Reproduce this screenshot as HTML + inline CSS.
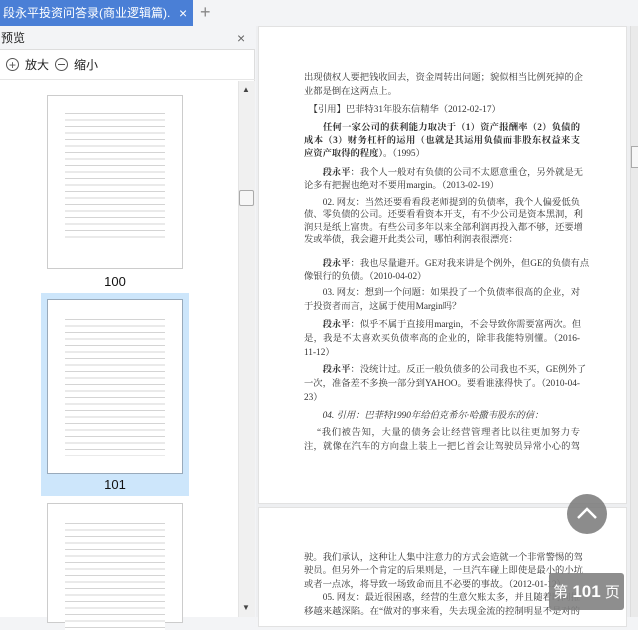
<!DOCTYPE html>
<html><head><meta charset="utf-8"><style>
*{margin:0;padding:0;box-sizing:border-box}
body{width:638px;height:617px;overflow:hidden;background:#f3f4f6;font-family:"Liberation Sans","Noto Sans CJK SC",sans-serif;position:relative}
.abs{position:absolute}
.tab{left:0;top:0;width:193px;height:26px;background:#4a7fd6;color:#fff;font-size:12px;line-height:26px;padding-left:3px;white-space:nowrap;overflow:hidden}
.tab .x{position:absolute;left:176px;top:0;font-size:14px;background:#4a7fd6;padding:0 3px}
.plus{left:200px;top:2px;font-size:18px;color:#888}
.side{left:0;top:26px;width:255px;height:591px;background:#fff;border-right:1px solid #ddd}
.hdr{left:0;top:26px;width:255px;height:24px;background:#f3f4f6;border-bottom:1px solid #ddd;font-size:12px;line-height:24px;padding-left:1px;color:#222}
.tool{left:0;top:50px;width:255px;height:30px;border-bottom:1px solid #e6e6e6;font-size:12px;line-height:30px;color:#222}
.sb{left:238px;top:81px;width:17px;height:536px;background:#f0f0f0;border-left:1px solid #e4e4e4}
.thumb{background:#fff;border:1px solid #ccc}
.tl{background:repeating-linear-gradient(#fff 0,#fff 3px,#d4d4d4 3px,#d4d4d4 4px,#fff 4px,#fff 6.5px)}
.main{left:256px;top:26px;width:382px;height:591px;background:#eeeff1}
.page{background:#fff;left:258px;width:369px;border:1px solid #e2e2e2}
.ln{position:absolute;left:304px;width:276px;font-family:"Liberation Serif","Noto Serif CJK SC",serif;font-size:9.3px;color:#333;white-space:nowrap;text-align:justify;text-align-last:justify;line-height:12px}
.ln.s{text-align-last:left}
.b{font-weight:bold}
</style></head><body>
<div class="abs tab">段永平投资问答录(商业逻辑篇).<span class="x">×</span></div>
<div class="abs plus">+</div>
<div class="abs side"></div>
<div class="abs hdr">预览<span style="position:absolute;left:237px;top:0;color:#666;font-size:14px">×</span></div>
<div class="abs tool"><span style="position:absolute;left:6px;top:8px;width:13px;height:13px;border:1.3px solid #555;border-radius:50%"></span><span style="position:absolute;left:9px;top:0;font-size:12px;color:#555">+</span><span style="position:absolute;left:25px">放大</span><span style="position:absolute;left:55px;top:8px;width:13px;height:13px;border:1.3px solid #555;border-radius:50%"></span><span style="position:absolute;left:58px;top:14px;width:7px;height:1.3px;background:#555"></span><span style="position:absolute;left:74px">缩小</span></div>

<div class="abs thumb" style="left:47px;top:95px;width:136px;height:174px"><div class="abs tl" style="left:17px;top:14px;width:100px;height:128px"></div></div>
<div class="abs" style="left:0;top:274px;width:230px;text-align:center;font-size:13px;color:#111">100</div>
<div class="abs" style="left:41px;top:293px;width:148px;height:203px;background:#cde6fb"></div>
<div class="abs thumb" style="left:47px;top:299px;width:136px;height:175px;border-color:#9ab"><div class="abs tl" style="left:17px;top:16px;width:100px;height:140px"></div></div>
<div class="abs" style="left:0;top:477px;width:230px;text-align:center;font-size:13px;color:#111">101</div>
<div class="abs thumb" style="left:47px;top:503px;width:136px;height:120px"><div class="abs tl" style="left:17px;top:16px;width:100px;height:110px"></div></div>

<div class="abs sb"><div class="abs" style="left:3px;top:4px;font-size:8px;color:#444">▲</div><div class="abs" style="left:0;top:109px;width:15px;height:16px;background:#f6f6f6;border:1px solid #aaa;border-radius:2px"></div><div class="abs" style="left:3px;top:522px;font-size:8px;color:#444">▼</div></div>

<div class="abs main"></div>
<div class="abs page" style="top:26px;height:478px"></div>
<div class="abs page" style="top:507px;height:120px"></div>
<div class="abs" style="left:630px;top:26px;width:8px;height:591px;background:#eaeaea;border-left:1px solid #ddd"><div class="abs" style="left:0;top:120px;width:8px;height:22px;background:#f7f7f7;border:1px solid #aaa"></div></div>

<div class="ln" style="top:72px">出现债权人要把钱收回去，资金周转出问题；貌似相当比例死掉的企</div>
<div class="ln s" style="top:86px">业都是倒在这两点上。</div>
<div class="ln s" style="top:104px">　【引用】巴菲特31年股东信精华（2012-02-17）</div>
<div class="ln b" style="top:122px">　　任何一家公司的获利能力取决于（1）资产报酬率（2）负债的</div>
<div class="ln b" style="top:135px">成本（3）财务杠杆的运用（也就是其运用负债而非股东权益来支</div>
<div class="ln s" style="top:148px"><b>应资产取得的程度）</b>。（1995）</div>
<div class="ln" style="top:167px">　　<b>段永平</b>：我个人一般对有负债的公司不太愿意重仓，另外就是无</div>
<div class="ln s" style="top:180px">论多有把握也绝对不要用margin。（2013-02-19）</div>
<div class="ln" style="top:197px">　　02. 网友：当然还要看看段老师提到的负债率，我个人偏爱低负</div>
<div class="ln" style="top:209px">债、零负债的公司。还要看看资本开支，有不少公司是资本黑洞，利</div>
<div class="ln" style="top:222px">润只是纸上富贵。有些公司多年以来全部利润再投入都不够，还要增</div>
<div class="ln s" style="top:234px">发或举债，我会避开此类公司，哪怕利润表很漂亮：</div>
<div class="ln" style="top:258px">　　<b>段永平</b>：我也尽量避开。GE对我来讲是个例外，但GE的负债有点</div>
<div class="ln s" style="top:271px">像银行的负债。（2010-04-02）</div>
<div class="ln" style="top:287px">　　03. 网友：想到一个问题：如果投了一个负债率很高的企业，对</div>
<div class="ln s" style="top:301px">于投资者而言，这属于使用Margin吗？</div>
<div class="ln" style="top:319px">　　<b>段永平</b>：似乎不属于直接用margin，不会导致你需要富两次。但</div>
<div class="ln" style="top:333px">是，我是不太喜欢买负债率高的企业的，除非我能特别懂。（2016-</div>
<div class="ln s" style="top:347px">11-12）</div>
<div class="ln" style="top:364px">　　<b>段永平</b>：没统计过。反正一般负债多的公司我也不买，GE例外了</div>
<div class="ln" style="top:378px">一次，准备差不多换一部分到YAHOO。要看谁涨得快了。（2010-04-</div>
<div class="ln s" style="top:392px">23）</div>
<div class="ln s" style="top:410px;font-style:italic">　　04. 引用：巴菲特1990年给伯克希尔·哈撒韦股东的信：</div>
<div class="ln" style="top:427px">　 “我们被告知，大量的债务会让经营管理者比以往更加努力专</div>
<div class="ln" style="top:441px">注，就像在汽车的方向盘上装上一把匕首会让驾驶员异常小心的驾</div>
<div class="ln" style="top:552px">驶。我们承认，这种让人集中注意力的方式会造就一个非常警惕的驾</div>
<div class="ln" style="top:565px">驶员。但另外一个肯定的后果则是，一旦汽车碰上即使是最小的小坑</div>
<div class="ln s" style="top:579px">或者一点冰，将导致一场致命而且不必要的事故。（2012-01-12）</div>
<div class="ln" style="top:592px">　　05. 网友：最近很困惑，经营的生意欠账太多，并且随着时间推</div>
<div class="ln" style="top:606px">移越来越深陷。在“做对的事来看，失去现金流的控制明显不是对的</div>

<div class="abs" style="left:567px;top:494px;width:40px;height:40px;border-radius:50%;background:rgba(120,120,120,0.85)"><svg width="40" height="40"><path d="M11 24 L20 15 L29 24" stroke="#fff" stroke-width="2.5" fill="none"/></svg></div>
<div class="abs" style="left:549px;top:573px;width:75px;height:37px;background:rgba(130,130,130,0.9);border-radius:3px;color:#fff;font-size:15px;line-height:37px;text-align:center;white-space:nowrap">第 <b style="font-size:17px">101</b> 页</div>
</body></html>
